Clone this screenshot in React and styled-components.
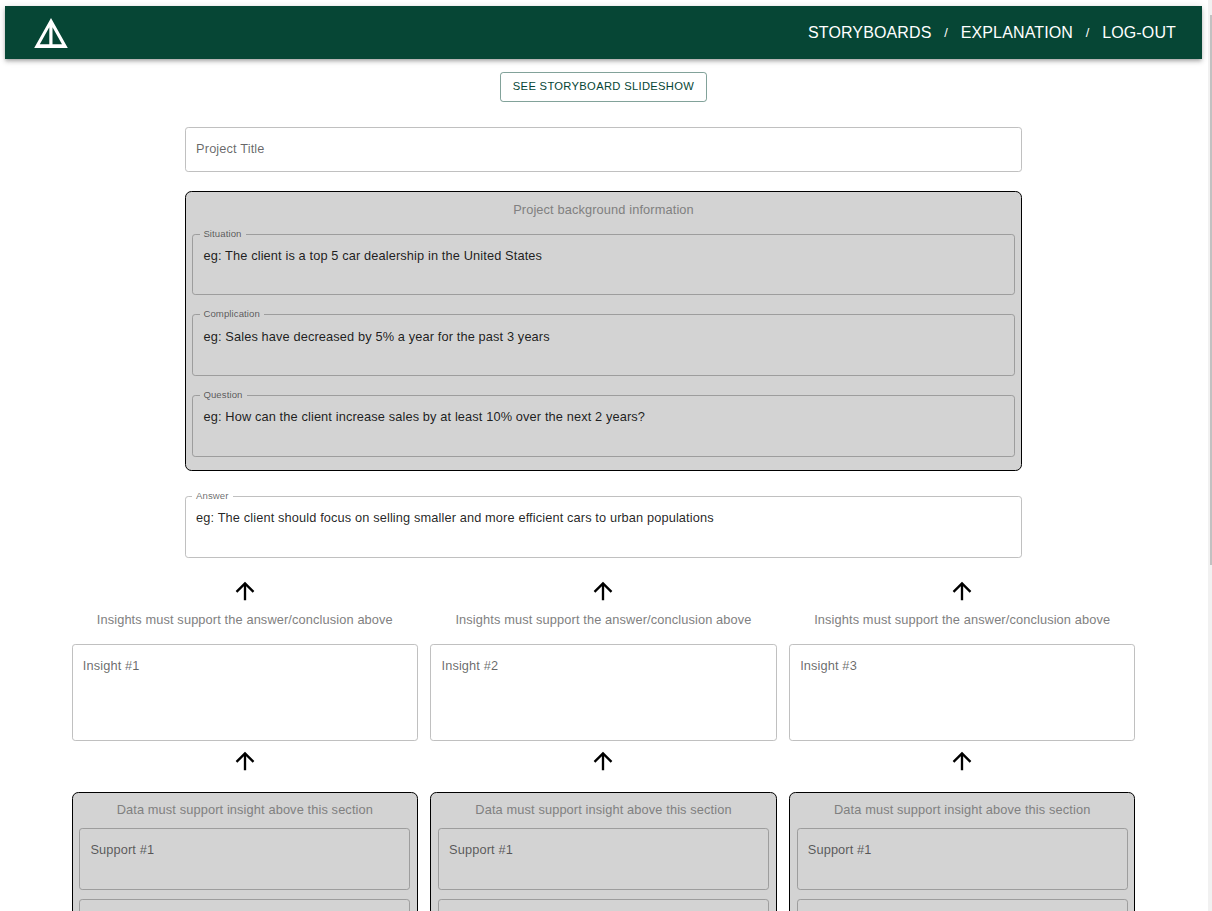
import React from "react";
import styled, { createGlobalStyle } from "styled-components";
import { MdArrowUpward } from "react-icons/md";

const GlobalStyle = createGlobalStyle`
  *, *::before, *::after { box-sizing: border-box; }
  body {
    margin: 0;
    background: #fff;
    font-family: "Liberation Sans", Arial, sans-serif;
    font-size: 12.8px;
    letter-spacing: 0.12px;
    overflow: hidden;
  }
`;

const Viewport = styled.div`
  display: grid;
  grid-template-columns: 1208px 4px;
  height: 911px;
  overflow: hidden;
`;

const Page = styled.div`
  display: flex;
  flex-direction: column;
  align-items: center;
  height: 911px;
  overflow: hidden;
  padding: 6px 6px 0 5px;
`;

const ScrollTrack = styled.div`
  background: #f1f1f1;
  padding: 15px 0 0 2px;
`;

const ScrollThumb = styled.div`
  height: 550px;
  background: #c1c1c1;
`;

const Header = styled.header`
  display: flex;
  align-items: center;
  justify-content: space-between;
  flex: none;
  width: 1197px;
  height: 53px;
  padding: 0 26px 0 29px;
  background: #064635;
  box-shadow: 0 1.6px 3.2px -0.8px rgba(0, 0, 0, 0.2),
    0 3.2px 4px rgba(0, 0, 0, 0.14), 0 0.8px 8px rgba(0, 0, 0, 0.12);
`;

const Logo = styled.svg`
  display: block;
  width: 34px;
  height: 30px;
`;

const Nav = styled.nav`
  display: flex;
  align-items: center;
  color: #fff;
`;

const NavLink = styled.a`
  font-size: 16px;
  line-height: 20px;
  letter-spacing: 0.13px;
  color: #fff;
`;

const Slash = styled.span`
  width: 29.2px;
  text-align: center;
  font-size: 12.8px;
  line-height: 20px;
`;

const SlideshowButton = styled.button`
  flex: none;
  width: 207px;
  height: 30px;
  margin-top: 13px;
  padding: 0 0 2px;
  border: 1px solid rgba(6, 70, 53, 0.5);
  border-radius: 3.2px;
  background: transparent;
  color: #064635;
  font: 11.2px "Liberation Sans", Arial, sans-serif;
  letter-spacing: 0.32px;
`;

const Story = styled.section`
  display: flex;
  flex-direction: column;
  flex: none;
  width: 837px;
  margin-top: 25px;
`;

const Panel = styled.div`
  display: flex;
  flex-direction: column;
  border: 1px solid #000;
  border-radius: 6.4px;
  background: #d3d3d3;
`;

const BackgroundPanel = styled(Panel)`
  height: 280px;
  margin: 19px 0 25px;
  padding: 10px 6.4px 0;
`;

const Hint = styled.p`
  margin: 0;
  line-height: 16px;
  text-align: center;
  white-space: nowrap;
  color: #808080;
`;

const FieldBox = styled.div`
  position: relative;
  flex: none;
  height: ${(p) => p.$h}px;
  margin-top: ${(p) => p.$mt || 0}px;
  padding: ${(p) => p.$pt || 12}px 10.1px 0;
  border: 1px solid ${(p) => (p.$gray ? "#9d9d9d" : "#c0c0c0")};
  border-radius: 3.2px;
  line-height: 18px;
  color: ${(p) => (p.$filled ? "rgba(0,0,0,0.87)" : "rgba(0,0,0,0.6)")};
`;

const FloatingLabel = styled.span`
  position: absolute;
  top: ${(p) => (p.$clipped ? -4 : -7)}px;
  left: 6.4px;
  height: ${(p) => (p.$clipped ? 9 : 12)}px;
  padding: 0 4.4px 0 3.6px;
  overflow: hidden;
  display: flex;
  align-items: flex-end;
  background: ${(p) => (p.$gray ? "#d3d3d3" : "#fff")};
  font-size: 9.6px;
  line-height: 12px;
  letter-spacing: 0.09px;
  color: rgba(0, 0, 0, 0.6);
`;

const Columns = styled.section`
  display: grid;
  grid-template-columns: repeat(3, 346.25px);
  column-gap: 12.45px;
  flex: none;
`;

const Column = styled.div`
  display: flex;
  flex-direction: column;
  padding-top: 19px;
`;

const Arrow = styled(MdArrowUpward)`
  display: block;
  flex: none;
  align-self: center;
  width: 28px;
  height: 28px;
  margin-right: 0.2px;
  color: #000;
`;

const InsightHint = styled(Hint)`
  margin: 7px 0 16px;
`;

const SupportPanel = styled(Panel)`
  height: 300px;
  margin-top: 17px;
  padding: 9px 6.6px 0;
`;

const InsightBox = styled(FieldBox)`
  margin-bottom: 6px;
`;

function Field({ label, text, gray, clipped, ...sizes }) {
  return (
    <FieldBox $gray={gray} $filled={Boolean(text)} {...sizes}>
      {text && (
        <FloatingLabel $gray={gray} $clipped={clipped}>
          {label}
        </FloatingLabel>
      )}
      {text || label}
    </FieldBox>
  );
}

export default function App() {
  return (
    <Viewport>
      <GlobalStyle />
      <Page>
        <Header>
          <Logo viewBox="0 0 34 30" aria-label="Home">
            <path
              fill="#fff"
              fillRule="evenodd"
              d="M17 0 L33.8 30 H0.2 Z M15.3 9.3 L5.8 26.3 H15.3 Z M18.5 9.3 V26.3 H28 Z"
            />
          </Logo>
          <Nav>
            <NavLink>STORYBOARDS</NavLink>
            <Slash>/</Slash>
            <NavLink>EXPLANATION</NavLink>
            <Slash>/</Slash>
            <NavLink>LOG-OUT</NavLink>
          </Nav>
        </Header>
        <SlideshowButton>SEE STORYBOARD SLIDESHOW</SlideshowButton>
        <Story>
          <Field label="Project Title" $h={45} />
          <BackgroundPanel>
            <Hint>Project background information</Hint>
            <Field
              gray
              label="Situation"
              text="eg: The client is a top 5 car dealership in the United States"
              $h={61}
              $mt={16}
            />
            <Field
              gray
              label="Complication"
              text="eg: Sales have decreased by 5% a year for the past 3 years"
              $h={62}
              $mt={19}
              $pt={13}
            />
            <Field
              gray
              label="Question"
              text="eg: How can the client increase sales by at least 10% over the next 2 years?"
              $h={62}
              $mt={19}
            />
          </BackgroundPanel>
          <Field
            clipped
            label="Answer"
            text="eg: The client should focus on selling smaller and more efficient cars to urban populations"
            $h={62}
          />
        </Story>
        <Columns>
          {[1, 2, 3].map((n) => (
            <Column key={n}>
              <Arrow />
              <InsightHint>
                Insights must support the answer/conclusion above
              </InsightHint>
              <InsightBox $h={97}>Insight #{n}</InsightBox>
              <Arrow />
              <SupportPanel>
                <Hint>Data must support insight above this section</Hint>
                <Field gray label="Support #1" $h={62} $mt={10} />
                <Field gray $h={62} $mt={9} />
              </SupportPanel>
            </Column>
          ))}
        </Columns>
      </Page>
      <ScrollTrack>
        <ScrollThumb />
      </ScrollTrack>
    </Viewport>
  );
}
